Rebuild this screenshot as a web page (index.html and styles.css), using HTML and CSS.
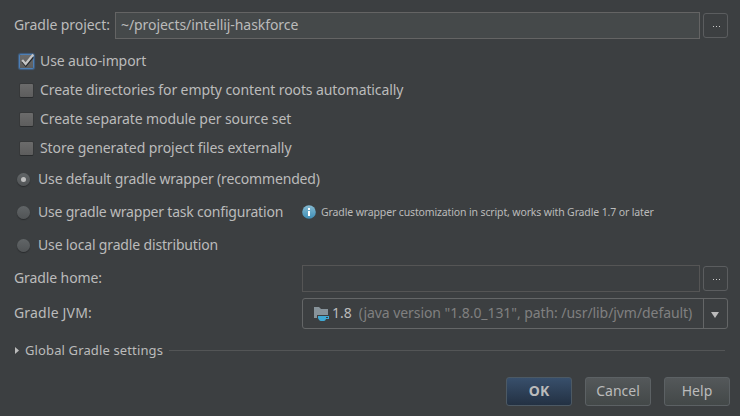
FILE: index.html
```html
<!DOCTYPE html>
<html lang="en">
<head>
<meta charset="utf-8">
<title>Gradle settings</title>
<link rel="stylesheet" href="styles.css">
</head>
<body>
<main class="dialog">
  <div class="row project">
    <span class="label t-project">Gradle project:</span>
    <div class="field filled"><span class="t-path">~/projects/intellij-haskforce</span></div>
    <button class="browse"><i></i><i></i><i></i></button>
  </div>
  <label class="row check first"><span class="box checked"><svg width="18" height="18" viewBox="0 0 18 18"><path d="M4.500 8.500 7.800 12.500 15 4" fill="none" stroke="#26282a" stroke-width="2.4"/><path d="M4.200 7 7.600 11 15.300 1.500" fill="none" stroke="#c4c4c4" stroke-width="2.2"/></svg></span><span class="t-auto">Use auto-import</span></label>
  <label class="row check"><span class="box"></span><span class="t-dirs">Create directories for empty content roots automatically</span></label>
  <label class="row check"><span class="box"></span><span class="t-module">Create separate module per source set</span></label>
  <label class="row check"><span class="box"></span><span class="t-store">Store generated project files externally</span></label>
  <label class="row radio"><span class="dot on"></span><span class="t-default">Use default gradle wrapper (recommended)</span></label>
  <div class="row radio"><span class="dot"></span><span class="t-task">Use gradle wrapper task configuration</span>
    <span class="hint"><svg width="14" height="14" viewBox="0 0 14 14"><defs><linearGradient id="info" x2="0" y2="1"><stop stop-color="#86bbd2"/><stop offset="1" stop-color="#3d8db5"/></linearGradient></defs><circle cx="7" cy="7" r="6.8" fill="url(#info)"/><path d="M6 3h2v2H6zM6 6h2v5H6z" fill="#fff"/></svg><span class="t-hint">Gradle wrapper customization in script, works with Gradle 1.7 or later</span></span>
  </div>
  <label class="row radio"><span class="dot"></span><span class="t-local">Use local gradle distribution</span></label>
  <div class="row home">
    <span class="label wide"><span class="t-home">Gradle home:</span></span>
    <div class="field"></div>
    <button class="browse"><i></i><i></i><i></i></button>
  </div>
  <div class="row jvm">
    <span class="label wide"><span class="t-jvm">Gradle JVM:</span></span>
    <div class="combo">
      <svg class="folder" width="16" height="15" viewBox="0 0 16 15"><path d="M0 0h5l2 2h7v6H3v3H0z" fill="#87939a"/><path d="M4 9h11v3h-3c-.5 1.200-1 2-2 2H7c-1.500 0-2.500-1.500-3-3z" fill="#40a9d4"/><path d="M12 10h2v1h-2z" fill="#3c3f41"/></svg>
      <span class="version">1.8</span><span class="path t-java">(java version "1.8.0_131", path: /usr/lib/jvm/default)</span>
      <span class="arrow"><svg width="8" height="6" viewBox="0 0 8 6"><path d="M0 0h8L4 6z" fill="#bbb"/></svg></span>
    </div>
  </div>
  <div class="row global">
    <svg width="4" height="7" viewBox="0 0 4 7"><path d="M0 0 4 3.500 0 7z" fill="#bbb"/></svg>
    <span class="t-global">Global Gradle settings</span><span class="rule"></span>
  </div>
  <div class="actions">
    <button class="btn primary">OK</button><button class="btn">Cancel</button><button class="btn">Help</button>
  </div>
</main>
</body>
</html>
```
FILE: styles.css
```css
* { box-sizing: border-box; }
body { margin: 0; background: #3c3f41; color: #bbb; font: 14px/20px "Noto Sans", sans-serif; }
button { font: inherit; color: inherit; padding: 0; }
.dialog { width: 740px; height: 416px; overflow: hidden; padding: 12px 10px 0 14px; display: flex; flex-direction: column; }
.row { display: flex; align-items: center; flex: none; white-space: nowrap; }
.project { height: 27px; padding-right: 2px; }
.label { width: 101px; flex: none; padding-bottom: 2px; }
.wide { width: 288px; }
.field { flex: 1; height: 27px; border: 1px solid #555; padding: 2px 5px; }
.filled { background: #45494a; border: 1px solid #646464; }
.browse { width: 25px; height: 25px; margin-left: 3px; border: 1px solid #5b5d5f; border-radius: 3px; background: none; display: flex; align-items: center; justify-content: center; gap: 2px; padding: 2px 0 0 2px; }
.browse i { width: 1px; height: 1px; background: #ccc; }
.check { height: 29px; padding-left: 4px; gap: 5px; }
.first { margin-top: 7px; }
.box { width: 17px; height: 17px; margin-top: 1px; flex: none; display: flex; align-items: center; justify-content: center; }
.box::before { content: ""; width: 13px; height: 13px; background: linear-gradient(#6b6b6b, #5d5d5d); border-radius: 1px; box-shadow: 0 1px 0 0 #292b2d, 0 0 0 1px #363839; flex: none; }
.checked { position: relative; }
.checked::before { box-shadow: 0 0 0 1px #4d7fb5, 0 0 1px 2px #405f82; }
.checked svg { position: absolute; left: 0; top: 0; }
.radio { height: 33px; padding-left: 3px; gap: 8px; }
.dot { width: 13px; height: 13px; margin-top: 1px; border-radius: 50%; background: linear-gradient(#616567, #515456); box-shadow: 0 1px 1px 0 #292b2d; display: flex; align-items: center; justify-content: center; flex: none; }
.on::after { content: ""; width: 5px; height: 5px; border-radius: 50%; background: #c0c0c0; }
.hint { display: flex; align-items: center; gap: 5px; margin-left: 11px; font-size: 10.5px; }
.home { height: 27px; margin-top: 4px; padding-right: 2px; }
.jvm { height: 31px; margin-top: 6px; padding-right: 2px; }
.combo { flex: 1; min-width: 0; height: 31px; border: 1px solid #646667; border-radius: 3px; display: flex; align-items: center; padding-left: 11px; }
.folder { flex: none; margin: 2px 2px 0 0; }
.version { margin-right: 7px; padding-bottom: 2px; }
.path { color: #808080; padding-bottom: 2px; }
.arrow { width: 24px; height: 29px; margin-left: auto; border-left: 1px solid #646667; display: flex; align-items: center; justify-content: center; flex: none; padding: 2px 1px 0 0; }
.global { height: 20px; margin-top: 11px; font-size: 13px; padding-right: 5px; }
.global svg { margin: 0 6px 0 1px; }
.rule { flex: 1; height: 1px; background: #535556; margin-left: 6px; }
.actions { display: flex; gap: 13px; justify-content: flex-end; margin-top: 17px; }
.btn { width: 66px; height: 29px; padding-bottom: 2px; border: 1px solid #5c6164; border-radius: 3px; background: linear-gradient(#54585a, #434848); }
.primary { font-weight: 700; background: linear-gradient(#384f6b, #233143); border-color: #4c5964; }

.t-project, .t-path, .t-store, .t-java { letter-spacing: -.07px; }
.t-auto, .t-dirs, .t-module, .t-home { letter-spacing: -.1px; }
.t-default, .t-local { letter-spacing: -.155px; }
.t-task { letter-spacing: -.2px; }
.t-jvm { letter-spacing: .18px; }
.t-global { letter-spacing: .13px; }
.t-hint { letter-spacing: -.135px; }
```
